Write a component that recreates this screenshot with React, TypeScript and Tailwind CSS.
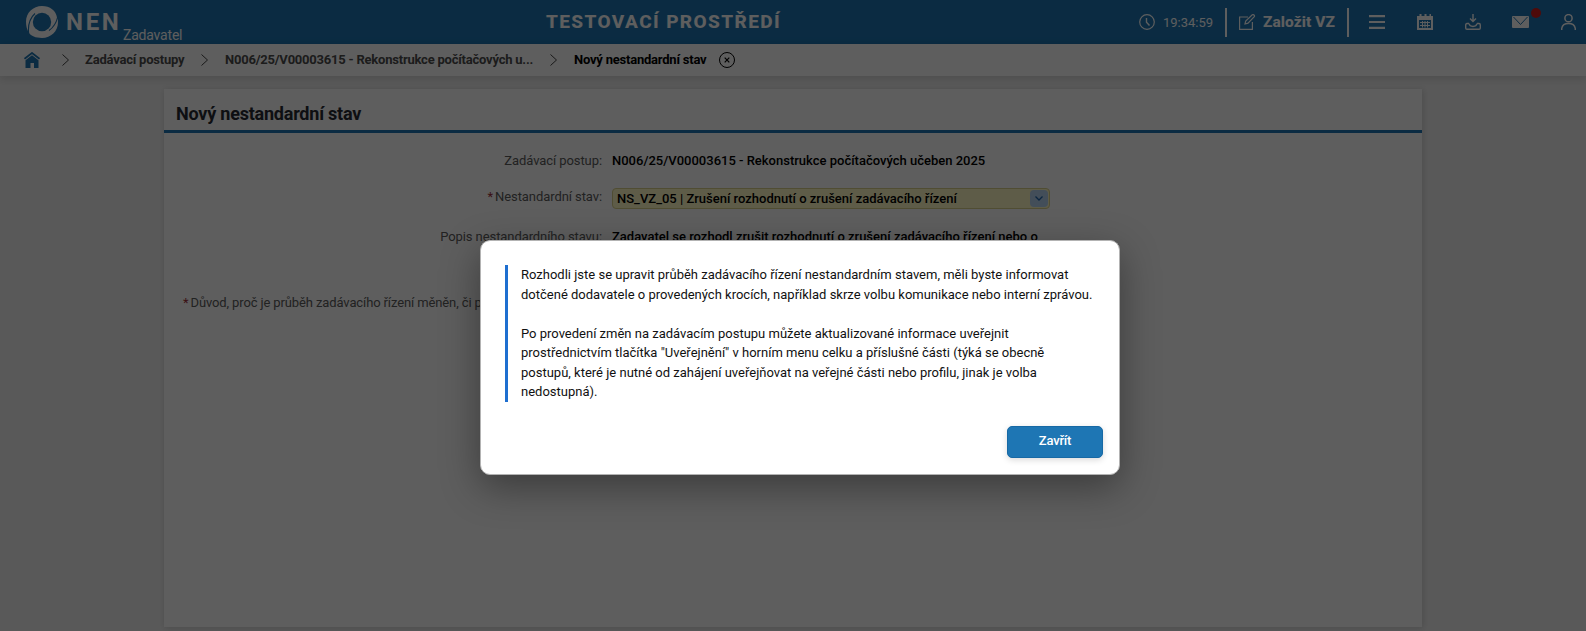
import React from "react";

function Logo() {
  return (
    <svg className="h-8 w-8 shrink-0" viewBox="0 0 32 32">
      <path fill="#fff" d="M2.500 26C.8 23 0 19.500 0 15.500C0 7 7 0 16 0C24 0 30 4.500 31 11.500L31.700 13C32 14 32 15 32 16.500C32 25 25 32 16 32C9.500 32 5 30 3 26.800Z" />
      <circle cx="16" cy="16" r="9.200" fill="#1e76b4" />
      <path d="M2.600 27C1.800 18.500 4 12 9 7.500M31.800 10.500C30.500 16.500 28 21 23 24.500" fill="none" stroke="#1e76b4" strokeWidth="1.100" />
    </svg>
  );
}

function Chevron() {
  return (
    <svg className="h-3 w-[7px] shrink-0" viewBox="0 0 7 12" fill="none" stroke="#444" strokeWidth="1">
      <path d="M.5.5 6.500 6 .5 11.500" />
    </svg>
  );
}

function Header() {
  return (
    <header className="flex h-11 shrink-0 items-start bg-[#1e76b4] text-white">
      <div className="ml-[26px] mt-1.5">
        <Logo />
      </div>
      <div className="ml-2 mt-2 w-[56px] whitespace-nowrap text-[24px] font-bold leading-7 tracking-[2.7px]">NEN</div>
      <div className="ml-[1px] mt-[27px] w-[64px] whitespace-nowrap text-[14px] leading-4 tracking-[-0.2px]">Zadavatel</div>
      <div className="ml-[359px] mt-2.5 w-[241px] whitespace-nowrap text-[19px] font-extrabold leading-6 tracking-[1.4px]">TESTOVACÍ PROSTŘEDÍ</div>
      <svg className="ml-[352px] mt-3.5 h-4 w-4 shrink-0" viewBox="0 0 16 16" fill="none" stroke="#fff" strokeWidth="1.200">
        <circle cx="8" cy="8" r="7.300" />
        <path strokeWidth="1.400" d="M7.500 4v4.200L10.500 11.500" />
      </svg>
      <div className="ml-[8px] mt-[15px] w-[52px] whitespace-nowrap text-[13px] leading-4">19:34:59</div>
      <div className="ml-[10px] mt-2 h-[29px] w-0.5 bg-white" />
      <svg className="ml-3 mt-3.5 h-4 w-[17px] shrink-0" viewBox="0 0 17 16" fill="none" stroke="#fff" strokeWidth="1.200">
        <path d="M9 3H.6v12.400h12.800V8M6 10l.7-3L13.300.8q.8-.6 1.700.2t.3 1.700L9 9.200 6 10Z" />
      </svg>
      <div className="ml-[7px] mt-3 w-[72px] whitespace-nowrap text-[15.500px] font-extrabold leading-5 tracking-[0.06px]">Založit VZ</div>
      <div className="ml-3 mt-2 h-[29px] w-0.5 bg-white" />
      <svg className="ml-5 mt-[15px] h-3.5 w-4 shrink-0" viewBox="0 0 16 14" fill="#fff">
        <path d="M0 0h16v2.200H0zM0 6h16v2H0zM0 11.800h16V14H0z" />
      </svg>
      <svg className="ml-8 mt-3.5 h-4 w-4 shrink-0" viewBox="0 0 16 16">
        <path fill="#fff" fillRule="evenodd" d="M0 2h2.500V0h2v2h3V0h2v2h3V0h1.500v2h2v14H0ZM2 6v8h12V6Z" />
        <path stroke="#fff" strokeWidth="1" d="M3 8.500h10M3 11.500h10M5.500 7v6.500M8 7v6.500M10.500 7v6.500" />
      </svg>
      <svg className="ml-8 mt-3.5 h-4 w-4 shrink-0" viewBox="0 0 16 16" fill="none" stroke="#fff" strokeWidth="1.400">
        <path d="M8 0v7M5 4.500 8 7.500l3-3M4 9.500H2Q.7 9.500.7 11v3Q.7 15.300 2 15.300h12q1.300 0 1.300-1.300v-3Q15.300 9.500 14 9.500h-2M4 9.500q.5 3 4 3t4-3" />
      </svg>
      <div className="relative ml-[31px] mt-4 h-3 w-[17px] shrink-0">
        <svg className="h-3 w-[17px]" viewBox="0 0 17 12">
          <rect width="17" height="12" rx="1" fill="#fff" />
          <path d="M1.500 1 8.500 8.500 15.500 1" fill="none" stroke="#1e76b4" strokeWidth="1" />
        </svg>
        <span className="absolute -top-2 left-[19px] h-2.5 w-2.5 rounded-full bg-[#d41c1c]" />
      </div>
      <svg className="ml-8 mt-3.5 h-4 w-[15px] shrink-0" viewBox="0 0 15 16" fill="none" stroke="#fff" strokeWidth="1.500">
        <circle cx="7.500" cy="4.200" r="3.600" />
        <path d="M.7 16v-1.500Q1.500 9.600 7.500 9.600t6.800 4.900V16" />
      </svg>
    </header>
  );
}

function Breadcrumbs() {
  return (
    <nav className="z-10 flex h-8 shrink-0 items-center bg-white text-[13px] font-bold tracking-[-0.22px] text-[#4d4d4d] shadow-[0_2px_10px_rgba(0,0,0,0.15)]">
      <svg className="ml-6 h-4 w-4 shrink-0" viewBox="0 0 16 16">
        <path fill="none" stroke="#1e76b4" strokeWidth="1.800" d="M.5 6.800 8 1l7.500 5.800" />
        <path fill="#1e76b4" d="M1.500 8.300 8 3.300l6.500 5V16H10v-5H6.500v5h-5Z" />
      </svg>
      <div className="ml-[22px] flex"><Chevron /></div>
      <span className="ml-4 w-[100px] whitespace-nowrap">Zadávací postupy</span>
      <div className="ml-4 flex"><Chevron /></div>
      <span className="ml-[17px] w-[309px] whitespace-nowrap">N006/25/V00003615 - Rekonstrukce počítačových u...</span>
      <div className="ml-4 flex"><Chevron /></div>
      <span className="ml-[17px] w-[133px] whitespace-nowrap text-black">Nový nestandardní stav</span>
      <svg className="ml-3 h-4 w-4 shrink-0" viewBox="0 0 16 16" fill="none" stroke="#000">
        <circle cx="8" cy="8" r="7.500" />
        <path strokeWidth="1.200" d="m5.700 5.700 4.600 4.600m0-4.600-4.600 4.600" />
      </svg>
    </nav>
  );
}

function Row({ label, required, className, children }: { label: string; required?: boolean; className: string; children: React.ReactNode }) {
  return (
    <div className={"flex items-start " + className}>
      <div className="w-[438px] shrink-0 whitespace-nowrap text-right text-[13px] leading-5 tracking-[-0.08px] text-[#5c5c5c]">
        {required && <span className="mr-0.5 text-[#a03038]">*</span>}
        {label}
      </div>
      <div className="ml-[10px] text-[13px] font-medium leading-5 text-black">{children}</div>
    </div>
  );
}

function Panel() {
  return (
    <main className="ml-[164px] mt-[13px] h-[538px] w-[1258px] bg-white shadow-[1px_1px_6px_rgba(0,0,0,0.15)]">
      <h1 className="h-[44px] border-b-3 border-[#1e76b4] pl-3 pt-[13px] text-[18px] font-bold leading-6 tracking-[-0.22px] text-[#262b33]">Nový nestandardní stav</h1>
      <Row label="Zadávací postup:" className="mt-[18px]">N006/25/V00003615 - Rekonstrukce počítačových učeben 2025</Row>
      <Row label="Nestandardní stav:" required className="mt-4">
        <div className="mt-[1px] flex h-[21px] w-[438px] items-center justify-between rounded-[4px] border border-[#d9d18a] bg-[#fffac4] pl-1 pr-[1px]">
          <span>NS_VZ_05 | Zrušení rozhodnutí o zrušení zadávacího řízení</span>
          <span className="flex h-[17px] w-[18px] items-center justify-center rounded-[4px] bg-[#b5d3f1]">
            <svg className="h-[5px] w-2" viewBox="0 0 8 5" fill="none" stroke="#1e66ad" strokeWidth="1.300"><path d="m.5.5 3.500 3.500L7.500.5" /></svg>
          </span>
        </div>
      </Row>
      <Row label="Popis nestandardního stavu:" className="mt-[18px]">Zadavatel se rozhodl zrušit rozhodnutí o zrušení zadávacího řízení nebo o</Row>
      <div className="ml-[19px] mt-[46px] whitespace-nowrap text-[13px] leading-5 tracking-[-0.12px] text-[#5c5c5c]">
        <span className="mr-0.5 text-[#a03038]">*</span>Důvod, proč je průběh zadávacího řízení měněn, či p
      </div>
    </main>
  );
}

function Dialog() {
  return (
    <div className="absolute inset-0 z-20 bg-black/63 pl-[480px] pt-[240px]">
      <section className="flex h-[235px] w-[640px] flex-col rounded-[10px] border border-[#b3b3b3] bg-white pl-6 pr-4 pt-6 shadow-[0_12px_38px_rgba(0,0,0,0.38)]">
        <div className="border-l-3 border-[#1e6fd0] pl-[13px] text-[13px] leading-[19.5px] text-[#111]">
          <p className="whitespace-nowrap">Rozhodli jste se upravit průběh zadávacího řízení nestandardním stavem, měli byste informovat<br />dotčené dodavatele o provedených krocích, například skrze volbu komunikace nebo interní zprávou.</p>
          <p className="mt-[19.5px] whitespace-nowrap">Po provedení změn na zadávacím postupu můžete aktualizované informace uveřejnit<br />prostřednictvím tlačítka "Uveřejnění" v horním menu celku a příslušné části (týká se obecně<br />postupů, které je nutné od zahájení uveřejňovat na veřejné části nebo profilu, jinak je volba<br />nedostupná).</p>
        </div>
        <button className="mt-[24.500px] flex h-8 w-24 items-start justify-center self-end rounded-[5px] border border-[#1769a5] bg-[#1e76b4] pt-[5px] text-[13px] font-medium leading-[18px] tracking-[-0.2px] text-white shadow-[0_2px_6px_rgba(0,0,0,0.15)]">Zavřít</button>
      </section>
    </div>
  );
}

export default function App() {
  return (
    <div className="relative flex h-[631px] w-[1586px] flex-col overflow-hidden bg-[#f1f1f1] font-[Roboto,sans-serif]">
      <Header />
      <Breadcrumbs />
      <Panel />
      <Dialog />
    </div>
  );
}
